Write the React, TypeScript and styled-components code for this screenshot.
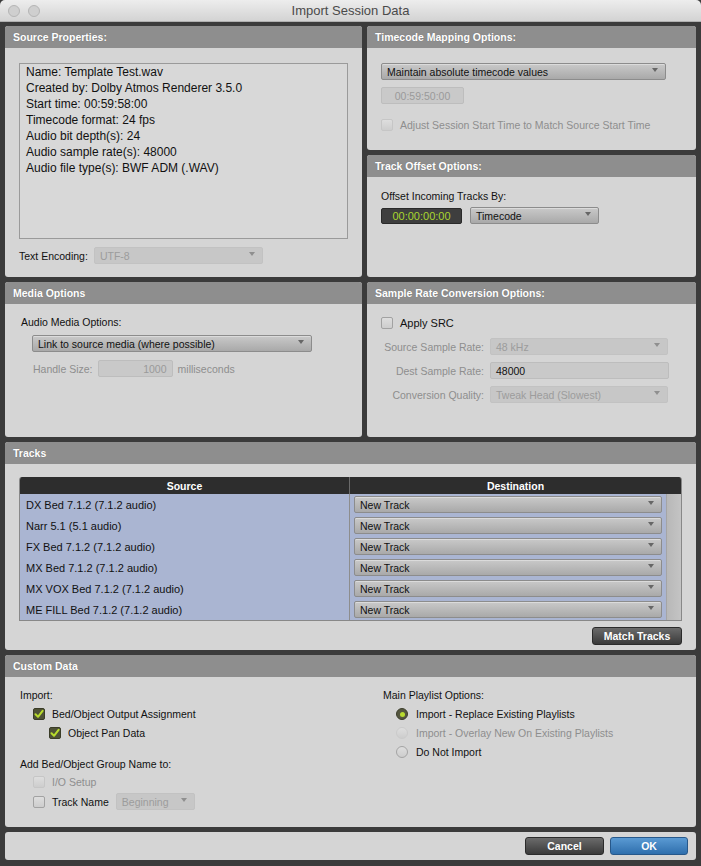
import React from "react";
import styled, { createGlobalStyle, css } from "styled-components";

const Global = createGlobalStyle`
  html, body { margin: 0; padding: 0; background: #3b3b3b; }
  body { font-family: "Liberation Sans", Arial, sans-serif; font-size: 10.5px; color: #111; }
  * { box-sizing: border-box; }
`;

const Window = styled.div`
  width: 701px;
  height: 866px;
  display: flex;
  flex-direction: column;
  background: #3b3b3b;
  overflow: hidden;
`;

const TitleBar = styled.div`
  height: 22px;
  flex: none;
  display: grid;
  grid-template-columns: 60px 1fr 60px;
  align-items: center;
  background: linear-gradient(#ededed, #d3d3d3);
  border-bottom: 1px solid #b0b0b0;
  border-radius: 5px 5px 0 0;
`;

const Lights = styled.div`
  display: flex;
  gap: 8px;
  padding-left: 8px;
`;

const Light = styled.span`
  width: 12px;
  height: 12px;
  border-radius: 50%;
  background: #cfcfcf;
  border: 1px solid #b5b5b5;
`;

const Title = styled.div`
  text-align: center;
  font-size: 13px;
  color: #4a4a4a;
`;

const Body = styled.div`
  flex: 1;
  display: grid;
  grid-template-columns: 357px 329px;
  grid-template-rows: 251px 155px 208px 172px 28px;
  gap: 5px;
  padding: 4px 5px 6px 5px;
`;

const Stack = styled.div`
  display: grid;
  grid-template-rows: 124px 122px;
  gap: 5px;
`;

const Panel = styled.section<{ $wide?: boolean }>`
  background: #d5d5d5;
  border-radius: 3px;
  display: flex;
  flex-direction: column;
  overflow: hidden;
  ${(p) => p.$wide && css`grid-column: 1 / -1;`}
`;

const Header = styled.div`
  height: 22px;
  flex: none;
  display: flex;
  align-items: center;
  padding-left: 8px;
  background: #8e8e8e;
  color: #fff;
  font-weight: bold;
  font-size: 10.5px;
  text-shadow: 0 0 1px rgba(0,0,0,0.25);
`;

const Content = styled.div<{ $pt?: number; $pl?: number; $pr?: number }>`
  flex: 1;
  display: flex;
  flex-direction: column;
  padding: ${(p) => p.$pt ?? 15}px ${(p) => p.$pr ?? 14}px 0 ${(p) => p.$pl ?? 14}px;
`;

const InfoBox = styled.div`
  height: 176px;
  border: 1px solid #9a9a9a;
  background: #d8d8d8;
  padding: 0 6px;
  font-size: 12px;
  line-height: 16px;
  color: #111;
`;

const Row = styled.div<{ $gap?: number; $mt?: number; $ml?: number }>`
  display: flex;
  align-items: center;
  gap: ${(p) => p.$gap ?? 6}px;
  margin-top: ${(p) => p.$mt ?? 0}px;
  margin-left: ${(p) => p.$ml ?? 0}px;
`;

const Label = styled.span<{ $dim?: boolean; $w?: number; $size?: number }>`
  color: ${(p) => (p.$dim ? "#8e8e8e" : "#111")};
  white-space: nowrap;
  line-height: 12px;
  ${(p) => p.$size && css`font-size: ${p.$size}px;`}
  ${(p) => p.$w && css`width: ${p.$w}px; text-align: right;`}
`;

const SelectBox = styled.div<{ $w: number; $disabled?: boolean; $h?: number }>`
  position: relative;
  width: ${(p) => p.$w}px;
  height: ${(p) => p.$h ?? 17}px;
  display: flex;
  align-items: center;
  padding-left: 5px;
  border-radius: 2px;
  white-space: nowrap;
  ${(p) =>
    p.$disabled
      ? css`
          background: #c7c7c7;
          color: #9c9c9c;
          border: 1px solid #c2c2c2;
        `
      : css`
          background: linear-gradient(#c9c9c9, #a9a9a9);
          color: #111;
          border: 1px solid #8c8c8c;
          box-shadow: inset 0 1px 0 rgba(255,255,255,0.35);
        `}
  &::after {
    content: "";
    position: absolute;
    right: 7px;
    top: 4px;
    border-left: 3.5px solid transparent;
    border-right: 3.5px solid transparent;
    border-top: 4px solid ${(p) => (p.$disabled ? "#8f8f8f" : "#666")};
  }
`;

const Field = styled.div<{ $w: number; $dim?: boolean; $align?: string }>`
  width: ${(p) => p.$w}px;
  height: 17px;
  display: flex;
  align-items: center;
  justify-content: ${(p) => p.$align ?? "flex-start"};
  padding: 0 5px;
  background: #c9c9c9;
  border: 1px solid #bdbdbd;
  border-radius: 2px;
  color: ${(p) => (p.$dim ? "#9a9a9a" : "#111")};
`;

const Counter = styled.div`
  width: 81px;
  height: 16px;
  display: flex;
  align-items: center;
  justify-content: center;
  background: #3e3e3e;
  border: 1px solid #2a2a2a;
  border-radius: 2px;
  color: #a9d62e;
  font-size: 11px;
`;

const Box = styled.span<{ $checked?: boolean; $dim?: boolean }>`
  width: 12px;
  height: 12px;
  flex: none;
  display: inline-flex;
  align-items: center;
  justify-content: center;
  border-radius: 2px;
  ${(p) =>
    p.$checked
      ? css`
          background: #4f5236;
          border: 1px solid #3a3c28;
        `
      : css`
          background: linear-gradient(#dedede, #cdcdcd);
          border: 1px solid ${p.$dim ? "#c6c6c6" : "#a2a2a2"};
        `}
`;

const Radio = styled.span<{ $on?: boolean; $dim?: boolean }>`
  width: 12px;
  height: 12px;
  flex: none;
  border-radius: 50%;
  display: inline-flex;
  align-items: center;
  justify-content: center;
  ${(p) =>
    p.$on
      ? css`
          background: #55573f;
          border: 1px solid #3d3e2c;
          &::after {
            content: "";
            width: 5px;
            height: 5px;
            border-radius: 50%;
            background: #b9dc2f;
          }
        `
      : css`
          background: linear-gradient(#dedede, #cdcdcd);
          border: 1px solid ${p.$dim ? "#cbcbcb" : "#a4a4a4"};
        `}
`;

const Check = () => (
  <svg width="10" height="10" viewBox="0 0 10 10">
    <path d="M1.5 5.2 L4 7.8 L8.6 1.8" fill="none" stroke="#b8dc2c" strokeWidth="2" strokeLinecap="round" strokeLinejoin="round" />
  </svg>
);

const Table = styled.div`
  width: 663px;
  border: 1px solid #888;
  border-top: none;
  border-radius: 3px 3px 0 0;
  overflow: hidden;
`;

const THead = styled.div`
  display: grid;
  grid-template-columns: 329px 1fr;
  height: 17px;
  background: #2d2d2d;
  color: #fff;
  font-weight: bold;
  font-size: 10.5px;
`;

const TH = styled.div<{ $sep?: boolean }>`
  display: flex;
  align-items: center;
  justify-content: center;
  ${(p) => p.$sep && css`border-left: 1px solid #6a6a6a;`}
`;

const TBody = styled.div`
  display: grid;
  grid-template-columns: 329px 1fr 15px;
  grid-auto-rows: 21px;
  background: #aab5d2;
`;

const SrcCell = styled.div`
  display: flex;
  align-items: center;
  padding-left: 6px;
  color: #111;
  font-size: 11px;
`;

const DstCell = styled.div`
  display: flex;
  align-items: center;
  padding-left: 4px;
  border-left: 1px solid #8d8d8d;
`;

const Scroll = styled.div`
  grid-column: 3;
  grid-row: 1 / span 6;
  background: linear-gradient(90deg, #b8b8b8, #c4c4c4);
  border-left: 1px solid #a5a5a5;
`;

const DarkButton = styled.button<{ $blue?: boolean; $w: number }>`
  width: ${(p) => p.$w}px;
  height: 18px;
  border-radius: 3px;
  font-family: inherit;
  font-weight: bold;
  font-size: 10.5px;
  color: #fff;
  padding: 0;
  ${(p) =>
    p.$blue
      ? css`
          background: linear-gradient(#5a9ad3, #2f6fad);
          border: 1px solid #27588a;
        `
      : css`
          background: linear-gradient(#6b6b6b, #3a3a3a);
          border: 1px solid #2b2b2b;
        `}
`;

const RightRow = styled.div<{ $mt?: number }>`
  width: 663px;
  display: flex;
  justify-content: flex-end;
  gap: 6px;
  margin-top: ${(p) => p.$mt ?? 0}px;
`;

const Columns = styled.div`
  display: grid;
  grid-template-columns: 363px 1fr;
`;

const Col = styled.div`
  display: flex;
  flex-direction: column;
`;

const ButtonBar = styled.div`
  grid-column: 1 / -1;
  background: #d5d5d5;
  border-radius: 3px;
  display: flex;
  align-items: center;
  justify-content: flex-end;
  gap: 6px;
  padding-right: 8px;
`;

const tracks = [
  "DX Bed 7.1.2 (7.1.2 audio)",
  "Narr 5.1 (5.1 audio)",
  "FX Bed 7.1.2 (7.1.2 audio)",
  "MX Bed 7.1.2 (7.1.2 audio)",
  "MX VOX Bed 7.1.2 (7.1.2 audio)",
  "ME FILL Bed 7.1.2 (7.1.2 audio)",
];

export default function App() {
  return (
    <Window>
      <Global />
      <TitleBar>
        <Lights>
          <Light />
          <Light />
        </Lights>
        <Title>Import Session Data</Title>
        <span />
      </TitleBar>
      <Body>
        <Panel>
          <Header>Source Properties:</Header>
          <Content $pt={15}>
            <InfoBox>
              <div>Name: Template Test.wav</div>
              <div>Created by: Dolby Atmos Renderer 3.5.0</div>
              <div>Start time: 00:59:58:00</div>
              <div>Timecode format: 24 fps</div>
              <div>Audio bit depth(s): 24</div>
              <div>Audio sample rate(s): 48000</div>
              <div>Audio file type(s): BWF ADM (.WAV)</div>
            </InfoBox>
            <Row $mt={8} $gap={6}>
              <Label>Text Encoding:</Label>
              <SelectBox $w={169} $disabled>UTF-8</SelectBox>
            </Row>
          </Content>
        </Panel>
        <Stack>
          <Panel>
            <Header>Timecode Mapping Options:</Header>
            <Content $pt={15}>
              <SelectBox $w={285}>Maintain absolute timecode values</SelectBox>
              <Row $mt={7}>
                <Field $w={83} $dim $align="center">00:59:50:00</Field>
              </Row>
              <Row $mt={15} $gap={7}>
                <Box $dim />
                <Label $dim>Adjust Session Start Time to Match Source Start Time</Label>
              </Row>
            </Content>
          </Panel>
          <Panel>
            <Header>Track Offset Options:</Header>
            <Content $pt={13}>
              <Label>Offset Incoming Tracks By:</Label>
              <Row $mt={5} $gap={8}>
                <Counter>00:00:00:00</Counter>
                <SelectBox $w={129}>Timecode</SelectBox>
              </Row>
            </Content>
          </Panel>
        </Stack>
        <Panel>
          <Header>Media Options</Header>
          <Content $pt={12} $pl={16}>
            <Label>Audio Media Options:</Label>
            <Row $mt={7} $ml={11}>
              <SelectBox $w={280}>Link to source media (where possible)</SelectBox>
            </Row>
            <Row $mt={8} $ml={12} $gap={5}>
              <Label $dim>Handle Size:</Label>
              <Field $w={75} $dim $align="flex-end">1000</Field>
              <Label $dim>milliseconds</Label>
            </Row>
          </Content>
        </Panel>
        <Panel>
          <Header>Sample Rate Conversion Options:</Header>
          <Content $pt={13}>
            <Row $gap={7}>
              <Box />
              <Label $size={11}>Apply SRC</Label>
            </Row>
            <Row $mt={9} $gap={6} $ml={-14}>
              <Label $dim $w={117}>Source Sample Rate:</Label>
              <SelectBox $w={178} $disabled>48 kHz</SelectBox>
            </Row>
            <Row $mt={7} $gap={6} $ml={-14}>
              <Label $dim $w={117}>Dest Sample Rate:</Label>
              <Field $w={179}>48000</Field>
            </Row>
            <Row $mt={7} $gap={6} $ml={-14}>
              <Label $dim $w={117}>Conversion Quality:</Label>
              <SelectBox $w={178} $disabled>Tweak Head (Slowest)</SelectBox>
            </Row>
          </Content>
        </Panel>
        <Panel $wide>
          <Header>Tracks</Header>
          <Content $pt={13}>
            <Table>
              <THead>
                <TH>Source</TH>
                <TH $sep>Destination</TH>
              </THead>
              <TBody>
                {tracks.map((t, i) => (
                  <React.Fragment key={t}>
                    <SrcCell style={{ gridRow: i + 1 }}>{t}</SrcCell>
                    <DstCell style={{ gridRow: i + 1 }}>
                      <SelectBox $w={308} $h={17}>New Track</SelectBox>
                    </DstCell>
                  </React.Fragment>
                ))}
                <Scroll />
              </TBody>
            </Table>
            <RightRow $mt={6}>
              <DarkButton $w={90}>Match Tracks</DarkButton>
            </RightRow>
          </Content>
        </Panel>
        <Panel $wide>
          <Header>Custom Data</Header>
          <Content $pt={12} $pl={15} $pr={0}>
            <Columns>
              <Col>
                <Label>Import:</Label>
                <Row $mt={7} $ml={13} $gap={7}>
                  <Box $checked><Check /></Box>
                  <Label>Bed/Object Output Assignment</Label>
                </Row>
                <Row $mt={7} $ml={29} $gap={7}>
                  <Box $checked><Check /></Box>
                  <Label>Object Pan Data</Label>
                </Row>
                <Row $mt={19}>
                  <Label>Add Bed/Object Group Name to:</Label>
                </Row>
                <Row $mt={6} $ml={13} $gap={7}>
                  <Box $dim />
                  <Label $dim>I/O Setup</Label>
                </Row>
                <Row $mt={5} $ml={13} $gap={7}>
                  <Box />
                  <Label>Track Name</Label>
                  <SelectBox $w={79} $disabled>Beginning</SelectBox>
                </Row>
              </Col>
              <Col>
                <Label>Main Playlist Options:</Label>
                <Row $mt={7} $ml={13} $gap={8}>
                  <Radio $on />
                  <Label>Import - Replace Existing Playlists</Label>
                </Row>
                <Row $mt={7} $ml={13} $gap={8}>
                  <Radio $dim />
                  <Label $dim>Import - Overlay New On Existing Playlists</Label>
                </Row>
                <Row $mt={7} $ml={13} $gap={8}>
                  <Radio />
                  <Label>Do Not Import</Label>
                </Row>
              </Col>
            </Columns>
          </Content>
        </Panel>
        <ButtonBar>
          <DarkButton $w={79}>Cancel</DarkButton>
          <DarkButton $w={78} $blue>OK</DarkButton>
        </ButtonBar>
      </Body>
    </Window>
  );
}
